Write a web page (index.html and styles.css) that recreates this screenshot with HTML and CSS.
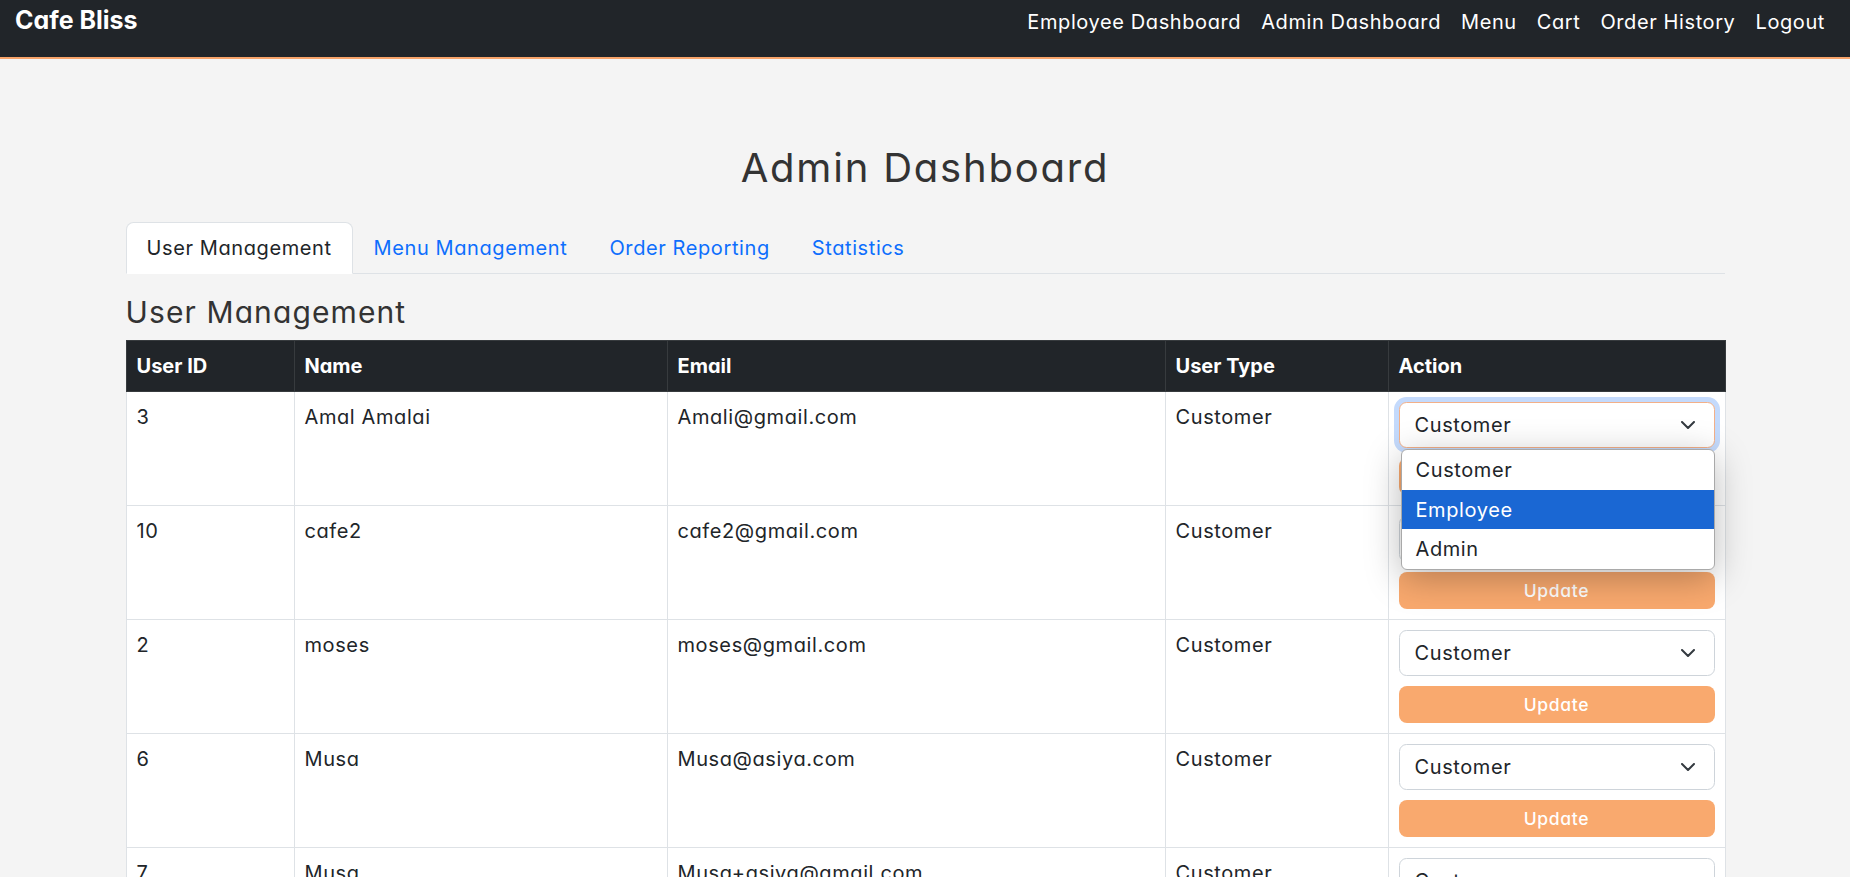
FILE: index.html
```html
<!DOCTYPE html>
<html lang="en">
<head>
<meta charset="utf-8">
<title>Admin Dashboard - Cafe Bliss</title>
<link rel="stylesheet" href="styles.css">
</head>
<body>
<nav class="navbar">
  <a class="brand" href="#">Cafe Bliss</a>
  <ul class="nav-links">
    <li><a href="#">Employee Dashboard</a></li>
    <li><a href="#">Admin Dashboard</a></li>
    <li><a href="#">Menu</a></li>
    <li><a href="#">Cart</a></li>
    <li><a href="#">Order History</a></li>
    <li><a href="#">Logout</a></li>
  </ul>
</nav>

<main class="container">
  <h1 class="page-title">Admin Dashboard</h1>

  <ul class="tabs">
    <li><a class="tab active" href="#">User Management</a></li>
    <li><a class="tab" href="#">Menu Management</a></li>
    <li><a class="tab" href="#">Order Reporting</a></li>
    <li><a class="tab" href="#">Statistics</a></li>
  </ul>

  <section class="pane">
    <h2 class="section-title">User Management</h2>
    <table class="users">
      <colgroup>
        <col class="c-id"><col class="c-name"><col class="c-email"><col class="c-type"><col class="c-action">
      </colgroup>
      <thead>
        <tr><th>User ID</th><th>Name</th><th>Email</th><th>User Type</th><th>Action</th></tr>
      </thead>
      <tbody>
        <tr>
          <td>3</td><td>Amal Amalai</td><td>Amali@gmail.com</td><td>Customer</td>
          <td>
            <div class="action">
              <div class="select focused">
                <span>Customer</span>
                <svg class="chev" width="14" height="8" viewBox="0 0 14 8"><path d="M1 1l6 6 6-6" fill="none" stroke="#343a40" stroke-width="2" stroke-linecap="round" stroke-linejoin="round"/></svg>
              </div>
              <ul class="popup">
                <li>Customer</li>
                <li class="hl">Employee</li>
                <li>Admin</li>
              </ul>
              <button class="btn-update" type="button">Update</button>
            </div>
          </td>
        </tr>
        <tr>
          <td>10</td><td>cafe2</td><td>cafe2@gmail.com</td><td>Customer</td>
          <td>
            <div class="action">
              <div class="select"><span>Customer</span>
                <svg class="chev" width="14" height="8" viewBox="0 0 14 8"><path d="M1 1l6 6 6-6" fill="none" stroke="#343a40" stroke-width="2" stroke-linecap="round" stroke-linejoin="round"/></svg>
              </div>
              <button class="btn-update" type="button">Update</button>
            </div>
          </td>
        </tr>
        <tr>
          <td>2</td><td>moses</td><td>moses@gmail.com</td><td>Customer</td>
          <td>
            <div class="action">
              <div class="select"><span>Customer</span>
                <svg class="chev" width="14" height="8" viewBox="0 0 14 8"><path d="M1 1l6 6 6-6" fill="none" stroke="#343a40" stroke-width="2" stroke-linecap="round" stroke-linejoin="round"/></svg>
              </div>
              <button class="btn-update" type="button">Update</button>
            </div>
          </td>
        </tr>
        <tr>
          <td>6</td><td>Musa</td><td>Musa@asiya.com</td><td>Customer</td>
          <td>
            <div class="action">
              <div class="select"><span>Customer</span>
                <svg class="chev" width="14" height="8" viewBox="0 0 14 8"><path d="M1 1l6 6 6-6" fill="none" stroke="#343a40" stroke-width="2" stroke-linecap="round" stroke-linejoin="round"/></svg>
              </div>
              <button class="btn-update" type="button">Update</button>
            </div>
          </td>
        </tr>
        <tr>
          <td>7</td><td>Musa</td><td>Musa+asiya@gmail.com</td><td>Customer</td>
          <td>
            <div class="action">
              <div class="select"><span>Customer</span>
                <svg class="chev" width="14" height="8" viewBox="0 0 14 8"><path d="M1 1l6 6 6-6" fill="none" stroke="#343a40" stroke-width="2" stroke-linecap="round" stroke-linejoin="round"/></svg>
              </div>
              <button class="btn-update" type="button">Update</button>
            </div>
          </td>
        </tr>
      </tbody>
    </table>
  </section>
</main>
</body>
</html>
```

FILE: styles.css
```css
* { box-sizing: border-box; }

html, body { overflow: hidden; }

body {
  margin: 0;
  background: #f4f4f4;
  color: #212529;
  font-family: "Inter", "Open Sans", sans-serif;
  font-feature-settings: "cv11" 1;
  font-size: 20px;
  line-height: 30px;
  letter-spacing: 0.03em;
}

a { text-decoration: none; }
ul { list-style: none; margin: 0; padding: 0; }

/* navbar */
.navbar {
  height: 59px;
  background: #212529;
  border-bottom: 2px solid #f8a46a;
  display: flex;
  justify-content: space-between;
  align-items: baseline;
  padding: 2px 15px 0 15px;
}
.brand {
  color: #fff;
  font-size: 25px;
  line-height: 37px;
  font-weight: 700;
  letter-spacing: 0;
}
.nav-links { display: flex; }
.nav-links a {
  display: block;
  color: #fff;
  padding: 0 10px;
}

/* container */
.container {
  max-width: 1599px;
  margin: 0 auto;
}

.page-title {
  margin: 85px 0 30px;
  text-align: center;
  font-size: 40px;
  line-height: 48px;
  font-weight: 400;
  letter-spacing: 0.045em;
  color: #333;
}

.tabs {
  display: flex;
  border-bottom: 1px solid #dee2e6;
}
.tab {
  display: block;
  padding: 10px 20px;
  margin-bottom: -1px;
  border: 1px solid transparent;
  border-radius: 7.5px 7.5px 0 0;
  color: #0d6efd;
}
.tab.active {
  background: #fff;
  color: #212529;
  border-color: #dee2e6 #dee2e6 #fff;
}

.section-title {
  margin: 20px 0 10px;
  font-size: 30px;
  line-height: 36px;
  font-weight: 400;
  letter-spacing: 0.037em;
  color: #333;
}

/* table */
.users {
  width: 100%;
  border-collapse: collapse;
  table-layout: fixed;
  background: #fff;
}
.c-id { width: 168px; }
.c-name { width: 373px; }
.c-email { width: 498px; }
.c-type { width: 223px; }
.c-action { width: 337px; }

.users th,
.users td {
  padding: 10px;
  border: 1px solid #dee2e6;
  text-align: left;
  vertical-align: top;
}
.users th {
  background: #212529;
  color: #fff;
  font-weight: 700;
  letter-spacing: 0;
  border-color: #373b3e;
}

.action { position: relative; }

.select {
  height: 46px;
  border: 1px solid #ced4da;
  border-radius: 7.5px;
  background: #fff;
  padding: 7px 19px 7px 15px;
  display: flex;
  align-items: center;
  justify-content: space-between;
}
.select.focused {
  border-color: #f3b088;
  box-shadow: 0 0 0 5px #c4dafc;
}
.chev { flex: none; }

.btn-update {
  display: block;
  width: 100%;
  height: 37px;
  margin-top: 10px;
  border: 0;
  border-radius: 8px;
  background: #f9a96e;
  color: #fff;
  font-family: inherit;
  font-feature-settings: "cv11" 1;
  font-size: 17.5px;
  font-weight: 500;
  letter-spacing: 0.04em;
  line-height: 26px;
}

.popup {
  position: absolute;
  z-index: 10;
  top: 47px;
  left: 2px;
  right: 0;
  background: #fff;
  border: 1px solid #a9a9a9;
  border-radius: 6px;
  overflow: hidden;
  box-shadow: 0 8px 36px rgba(0, 0, 0, 0.28);
}
.popup li {
  height: 39.7px;
  padding: 5px 14px;
  color: #212529;
}
.popup li.hl {
  background: #1a67d3;
  color: #fff;
}
```
